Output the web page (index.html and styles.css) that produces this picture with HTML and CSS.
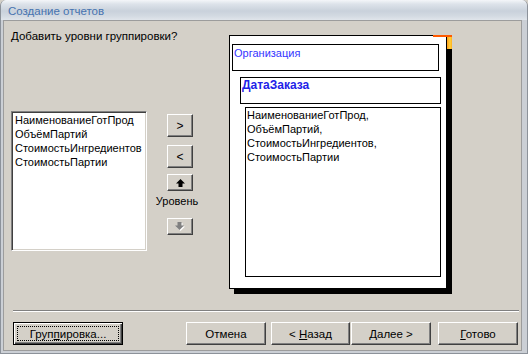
FILE: index.html
```html
<!DOCTYPE html>
<html lang="ru">
<head>
  <meta charset="UTF-8" />
  <title>Создание отчетов</title>
  <link rel="stylesheet" href="styles.css">
</head>
<body>
  <div class="window">
    <div class="titlebar">Создание отчетов</div>
    <div class="frame">
      <div class="pane">
        <div class="main">
          <div class="left">
            <p class="question">Добавить уровни группировки?</p>
            <ul class="fields">
              <li>НаименованиеГотПрод</li>
              <li>ОбъёмПартий</li>
              <li>СтоимостьИнгредиентов</li>
              <li>СтоимостьПартии</li>
            </ul>
          </div>

          <div class="movers">
            <button class="btn move">&gt;</button>
            <button class="btn move">&lt;</button>
            <button class="btn prio">
              <svg width="9" height="8" viewBox="0 0 9 8"><polygon points="4.5,0 9,4.5 6.5,4.5 6.5,8 2.5,8 2.5,4.5 0,4.5" fill="#000"/></svg>
            </button>
            <span class="level">Уровень</span>
            <button class="btn prio prio-down" disabled>
              <svg width="10" height="9" viewBox="0 0 10 9">
                <polygon points="3.5,1 7.5,1 7.5,4.5 10,4.5 5.5,9 1,4.5 3.5,4.5" fill="#fff"/>
                <polygon points="2.5,0 6.5,0 6.5,3.5 9,3.5 4.5,8 0,3.5 2.5,3.5" fill="#808080"/>
              </svg>
            </button>
          </div>

          <div class="preview">
            <span class="corner"></span>
            <div class="grp grp-org">Организация</div>
            <div class="grp grp-date">ДатаЗаказа</div>
            <div class="grp grp-detail">НаименованиеГотПрод,<br>ОбъёмПартий,<br>СтоимостьИнгредиентов,<br>СтоимостьПартии</div>
          </div>
        </div>

        <div class="separator"></div>

        <div class="actions">
          <button class="btn btn-focus"><span>Груп<u>п</u>ировка...</span></button>
          <button class="btn wide cancel"><span>Отмена</span></button>
          <button class="btn wide back"><span>&lt; <u>Н</u>азад</span></button>
          <button class="btn wide next"><span><u>Д</u>алее &gt;</span></button>
          <button class="btn wide done"><span><u>Г</u>отово</span></button>
        </div>
      </div>
    </div>
  </div>
</body>
</html>
```

FILE: styles.css
```css
* {
  box-sizing: border-box;
  margin: 0;
  padding: 0;
}
html, body {
  width: 528px;
  height: 354px;
  overflow: hidden;
}
body {
  font-family: "Liberation Sans", Arial, sans-serif;
  font-size: 11px;
  color: #000;
  background: #d4d0c8;
}
.window {
  height: 354px;
  display: flex;
  flex-direction: column;
  border: 1px solid #8c929a;
  border-top: none;
  border-radius: 6px 6px 0 0;
  background: #cbcfd5;
  overflow: hidden;
}
.titlebar {
  height: 20px;
  padding: 3px 0 0 7px;
  font-size: 11.5px;
  line-height: 17px;
  color: #4673b0;
  background: linear-gradient(#f4f6f9 0, #dde3ea 20%, #c9d1db 55%, #d3dae2 80%, #e0e5eb 100%);
}
.frame {
  flex: 1;
  padding: 0 5px 2px 2px;
}
.pane {
  height: 100%;
  border: 1px solid #9c9c9c;
  background: #d4d0c8;
}
.main {
  display: flex;
  align-items: flex-start;
  height: 273px;
  padding: 9px 0 0 7px;
}
.left {
  width: 136px;
}
.question {
  white-space: nowrap;
  font-size: 11.5px;
  line-height: 13px;
}
.fields {
  list-style: none;
  margin-top: 68px;
  width: 136px;
  height: 140px;
  padding: 1px 2px 0 3px;
  line-height: 14px;
  background: #fff;
  border: 1px solid;
  border-color: #808080 #fff #fff #808080;
  box-shadow: inset 1px 1px #404040, inset -1px -1px #d4d0c8;
}
.movers {
  width: 50px;
  margin: 84px 0 0 8px;
  display: flex;
  flex-direction: column;
  align-items: center;
}
.btn {
  font-family: "Liberation Sans", Arial, sans-serif;
  font-size: 11.5px;
  color: #000;
  background: #d4d0c8;
  border: 1px solid;
  border-color: #fff #404040 #404040 #fff;
  box-shadow: inset -1px -1px #808080;
  display: flex;
  align-items: center;
  justify-content: center;
}
.btn span {
  white-space: pre;
}
.move {
  width: 26px;
  height: 23px;
  margin-bottom: 8px;
  font-size: 12px;
}
.move + .move {
  margin-bottom: 6px;
}
.prio {
  width: 26px;
  height: 17px;
}
.prio-down {
  margin-top: 10px;
}
.level {
  margin-top: 3px;
  line-height: 14px;
  margin-right: 6px;
}
.preview {
  position: relative;
  width: 218px;
  height: 254px;
  margin: 5px 0 0 24px;
  padding-top: 8px;
  background: #fff;
  border: 1px solid #000;
  box-shadow: 5px 5px 0 #000;
  display: flex;
  flex-direction: column;
  align-items: flex-start;
}
.corner {
  position: absolute;
  top: -1px;
  right: -6px;
  width: 19px;
  height: 14px;
  border-top: 2px solid #ff5a00;
  background: linear-gradient(to right, transparent 14px, #ff9c1a 14px, #ffd23c 17px, #ffb020 19px);
}
.grp {
  border: 1px solid #000;
  height: 27px;
  line-height: 14px;
  padding: 1px 1px 0;
}
.grp-org {
  width: 207px;
  margin-left: 2px;
  color: #3535ff;
}
.grp-date {
  width: 201px;
  margin: 6px 0 0 10px;
  padding-top: 0;
  color: #2222e8;
  font-weight: bold;
  font-size: 12px;
}
.grp-detail {
  width: 196px;
  height: 170px;
  margin: 3px 0 0 15px;
  padding: 0 1px;
}
.separator {
  margin: 16px 2px 0 9px;
  height: 2px;
  border-top: 1px solid #808080;
  border-bottom: 1px solid #fff;
}
.actions {
  display: flex;
  height: 23px;
  margin: 10px 3px 0 9px;
}
.actions .btn {
  height: 23px;
}
.btn-focus {
  width: 110px;
  border: 1px solid #000;
  box-shadow: inset 1px 1px #fff, inset -1px -1px #404040, inset -2px -2px #808080;
  padding: 3px;
}
.btn-focus span {
  flex: 1;
  align-self: stretch;
  display: flex;
  align-items: center;
  justify-content: center;
  border: 1px dotted #000;
}
.wide {
  width: 80px;
}
.cancel {
  margin-left: auto;
}
.back {
  width: 79px;
  margin-left: 5px;
}
.next {
  margin-left: 1px;
}
.done {
  margin-left: 7px;
}
u {
  text-decoration: underline;
}
```
